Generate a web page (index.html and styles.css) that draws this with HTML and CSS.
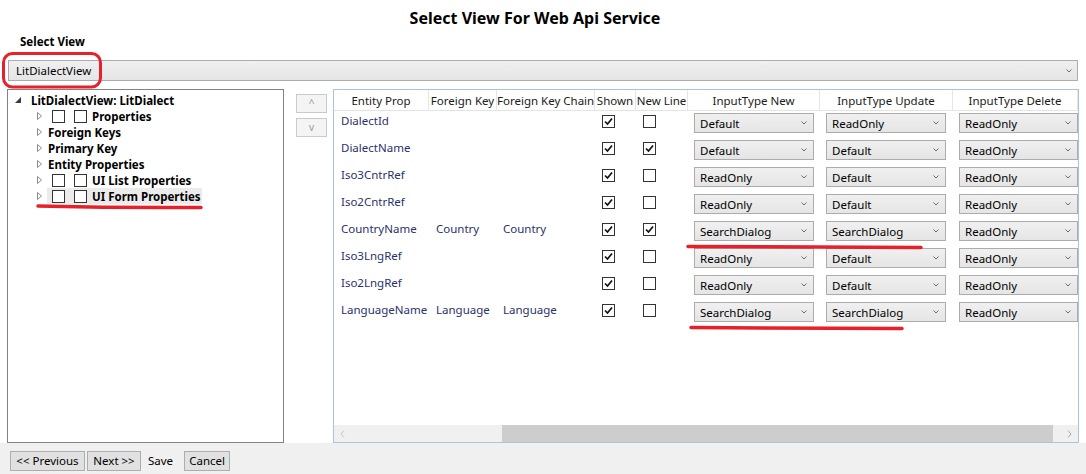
FILE: index.html
```html
<!DOCTYPE html>
<html>
<head>
<meta charset="utf-8">
<title>Select View For Web Api Service</title>
<link rel="stylesheet" href="styles.css">
</head>
<body>
<div class="page">
  <div class="title">Select View For Web Api Service</div>
  <div class="label">Select View</div>
  <div class="combo view-combo"><span>LitDialectView</span><svg class="chev" width="6" height="4" viewBox="0 0 6 4"><polyline points="0.5,0.5 3,3 5.5,0.5"/></svg></div>

  <div class="main">
    <div class="tree">
      <div class="trow root">
        <svg class="exp-open" width="6" height="6" viewBox="0 0 6 6"><polygon points="6,0 6,6 0,6"/></svg>
        <span class="item">LitDialectView: LitDialect</span>
      </div>
      <div class="trow child">
        <svg class="exp" width="6" height="8" viewBox="0 0 6 8"><path d="M0.5,0.5 L4.5,4 L0.5,7.5 Z"/></svg>
        <span class="item"><span class="cb"></span><span class="cb"></span>Properties</span>
      </div>
      <div class="trow child">
        <svg class="exp" width="6" height="8" viewBox="0 0 6 8"><path d="M0.5,0.5 L4.5,4 L0.5,7.5 Z"/></svg>
        <span class="item">Foreign Keys</span>
      </div>
      <div class="trow child">
        <svg class="exp" width="6" height="8" viewBox="0 0 6 8"><path d="M0.5,0.5 L4.5,4 L0.5,7.5 Z"/></svg>
        <span class="item">Primary Key</span>
      </div>
      <div class="trow child">
        <svg class="exp" width="6" height="8" viewBox="0 0 6 8"><path d="M0.5,0.5 L4.5,4 L0.5,7.5 Z"/></svg>
        <span class="item">Entity Properties</span>
      </div>
      <div class="trow child">
        <svg class="exp" width="6" height="8" viewBox="0 0 6 8"><path d="M0.5,0.5 L4.5,4 L0.5,7.5 Z"/></svg>
        <span class="item"><span class="cb"></span><span class="cb"></span>UI List Properties</span>
      </div>
      <div class="trow child">
        <svg class="exp" width="6" height="8" viewBox="0 0 6 8"><path d="M0.5,0.5 L4.5,4 L0.5,7.5 Z"/></svg>
        <span class="item selected"><span class="cb"></span><span class="cb"></span>UI Form Properties</span>
      </div>
    </div>

    <div class="movers">
      <button class="mover">^</button>
      <button class="mover">v</button>
    </div>

    <div class="grid">
      <div class="gcols ghead">
        <div class="hc">Entity Prop</div>
        <div class="hc">Foreign Key</div>
        <div class="hc">Foreign Key Chain</div>
        <div class="hc">Shown</div>
        <div class="hc">New Line</div>
        <div class="hc">InputType New</div>
        <div class="hc">InputType Update</div>
        <div class="hc">InputType Delete</div>
      </div>
      <div class="gbody">
        <div class="gcols grow">
          <div class="tc c1">DialectId</div><div class="tc c2"></div><div class="tc c3"></div>
          <div class="ck"><span class="box on"><svg width="11" height="11" viewBox="0 0 11 11"><path d="M2,5.5 L4.5,8 L9,2.5"/></svg></span></div>
          <div class="ck"><span class="box"></span></div>
          <div class="dd"><div class="combo sm"><span>Default</span><svg class="chev" width="6" height="4" viewBox="0 0 6 4"><polyline points="0.5,0.5 3,3 5.5,0.5"/></svg></div></div>
          <div class="dd"><div class="combo sm"><span>ReadOnly</span><svg class="chev" width="6" height="4" viewBox="0 0 6 4"><polyline points="0.5,0.5 3,3 5.5,0.5"/></svg></div></div>
          <div class="dd"><div class="combo sm"><span>ReadOnly</span><svg class="chev" width="6" height="4" viewBox="0 0 6 4"><polyline points="0.5,0.5 3,3 5.5,0.5"/></svg></div></div>
        </div>
        <div class="gcols grow">
          <div class="tc c1">DialectName</div><div class="tc c2"></div><div class="tc c3"></div>
          <div class="ck"><span class="box on"><svg width="11" height="11" viewBox="0 0 11 11"><path d="M2,5.5 L4.5,8 L9,2.5"/></svg></span></div>
          <div class="ck"><span class="box on"><svg width="11" height="11" viewBox="0 0 11 11"><path d="M2,5.5 L4.5,8 L9,2.5"/></svg></span></div>
          <div class="dd"><div class="combo sm"><span>Default</span><svg class="chev" width="6" height="4" viewBox="0 0 6 4"><polyline points="0.5,0.5 3,3 5.5,0.5"/></svg></div></div>
          <div class="dd"><div class="combo sm"><span>Default</span><svg class="chev" width="6" height="4" viewBox="0 0 6 4"><polyline points="0.5,0.5 3,3 5.5,0.5"/></svg></div></div>
          <div class="dd"><div class="combo sm"><span>ReadOnly</span><svg class="chev" width="6" height="4" viewBox="0 0 6 4"><polyline points="0.5,0.5 3,3 5.5,0.5"/></svg></div></div>
        </div>
        <div class="gcols grow">
          <div class="tc c1">Iso3CntrRef</div><div class="tc c2"></div><div class="tc c3"></div>
          <div class="ck"><span class="box on"><svg width="11" height="11" viewBox="0 0 11 11"><path d="M2,5.5 L4.5,8 L9,2.5"/></svg></span></div>
          <div class="ck"><span class="box"></span></div>
          <div class="dd"><div class="combo sm"><span>ReadOnly</span><svg class="chev" width="6" height="4" viewBox="0 0 6 4"><polyline points="0.5,0.5 3,3 5.5,0.5"/></svg></div></div>
          <div class="dd"><div class="combo sm"><span>Default</span><svg class="chev" width="6" height="4" viewBox="0 0 6 4"><polyline points="0.5,0.5 3,3 5.5,0.5"/></svg></div></div>
          <div class="dd"><div class="combo sm"><span>ReadOnly</span><svg class="chev" width="6" height="4" viewBox="0 0 6 4"><polyline points="0.5,0.5 3,3 5.5,0.5"/></svg></div></div>
        </div>
        <div class="gcols grow">
          <div class="tc c1">Iso2CntrRef</div><div class="tc c2"></div><div class="tc c3"></div>
          <div class="ck"><span class="box on"><svg width="11" height="11" viewBox="0 0 11 11"><path d="M2,5.5 L4.5,8 L9,2.5"/></svg></span></div>
          <div class="ck"><span class="box"></span></div>
          <div class="dd"><div class="combo sm"><span>ReadOnly</span><svg class="chev" width="6" height="4" viewBox="0 0 6 4"><polyline points="0.5,0.5 3,3 5.5,0.5"/></svg></div></div>
          <div class="dd"><div class="combo sm"><span>Default</span><svg class="chev" width="6" height="4" viewBox="0 0 6 4"><polyline points="0.5,0.5 3,3 5.5,0.5"/></svg></div></div>
          <div class="dd"><div class="combo sm"><span>ReadOnly</span><svg class="chev" width="6" height="4" viewBox="0 0 6 4"><polyline points="0.5,0.5 3,3 5.5,0.5"/></svg></div></div>
        </div>
        <div class="gcols grow">
          <div class="tc c1">CountryName</div><div class="tc c2">Country</div><div class="tc c3">Country</div>
          <div class="ck"><span class="box on"><svg width="11" height="11" viewBox="0 0 11 11"><path d="M2,5.5 L4.5,8 L9,2.5"/></svg></span></div>
          <div class="ck"><span class="box on"><svg width="11" height="11" viewBox="0 0 11 11"><path d="M2,5.5 L4.5,8 L9,2.5"/></svg></span></div>
          <div class="dd"><div class="combo sm"><span>SearchDialog</span><svg class="chev" width="6" height="4" viewBox="0 0 6 4"><polyline points="0.5,0.5 3,3 5.5,0.5"/></svg></div></div>
          <div class="dd"><div class="combo sm"><span>SearchDialog</span><svg class="chev" width="6" height="4" viewBox="0 0 6 4"><polyline points="0.5,0.5 3,3 5.5,0.5"/></svg></div></div>
          <div class="dd"><div class="combo sm"><span>ReadOnly</span><svg class="chev" width="6" height="4" viewBox="0 0 6 4"><polyline points="0.5,0.5 3,3 5.5,0.5"/></svg></div></div>
        </div>
        <div class="gcols grow">
          <div class="tc c1">Iso3LngRef</div><div class="tc c2"></div><div class="tc c3"></div>
          <div class="ck"><span class="box on"><svg width="11" height="11" viewBox="0 0 11 11"><path d="M2,5.5 L4.5,8 L9,2.5"/></svg></span></div>
          <div class="ck"><span class="box"></span></div>
          <div class="dd"><div class="combo sm"><span>ReadOnly</span><svg class="chev" width="6" height="4" viewBox="0 0 6 4"><polyline points="0.5,0.5 3,3 5.5,0.5"/></svg></div></div>
          <div class="dd"><div class="combo sm"><span>Default</span><svg class="chev" width="6" height="4" viewBox="0 0 6 4"><polyline points="0.5,0.5 3,3 5.5,0.5"/></svg></div></div>
          <div class="dd"><div class="combo sm"><span>ReadOnly</span><svg class="chev" width="6" height="4" viewBox="0 0 6 4"><polyline points="0.5,0.5 3,3 5.5,0.5"/></svg></div></div>
        </div>
        <div class="gcols grow">
          <div class="tc c1">Iso2LngRef</div><div class="tc c2"></div><div class="tc c3"></div>
          <div class="ck"><span class="box on"><svg width="11" height="11" viewBox="0 0 11 11"><path d="M2,5.5 L4.5,8 L9,2.5"/></svg></span></div>
          <div class="ck"><span class="box"></span></div>
          <div class="dd"><div class="combo sm"><span>ReadOnly</span><svg class="chev" width="6" height="4" viewBox="0 0 6 4"><polyline points="0.5,0.5 3,3 5.5,0.5"/></svg></div></div>
          <div class="dd"><div class="combo sm"><span>Default</span><svg class="chev" width="6" height="4" viewBox="0 0 6 4"><polyline points="0.5,0.5 3,3 5.5,0.5"/></svg></div></div>
          <div class="dd"><div class="combo sm"><span>ReadOnly</span><svg class="chev" width="6" height="4" viewBox="0 0 6 4"><polyline points="0.5,0.5 3,3 5.5,0.5"/></svg></div></div>
        </div>
        <div class="gcols grow">
          <div class="tc c1">LanguageName</div><div class="tc c2">Language</div><div class="tc c3">Language</div>
          <div class="ck"><span class="box on"><svg width="11" height="11" viewBox="0 0 11 11"><path d="M2,5.5 L4.5,8 L9,2.5"/></svg></span></div>
          <div class="ck"><span class="box"></span></div>
          <div class="dd"><div class="combo sm"><span>SearchDialog</span><svg class="chev" width="6" height="4" viewBox="0 0 6 4"><polyline points="0.5,0.5 3,3 5.5,0.5"/></svg></div></div>
          <div class="dd"><div class="combo sm"><span>SearchDialog</span><svg class="chev" width="6" height="4" viewBox="0 0 6 4"><polyline points="0.5,0.5 3,3 5.5,0.5"/></svg></div></div>
          <div class="dd"><div class="combo sm"><span>ReadOnly</span><svg class="chev" width="6" height="4" viewBox="0 0 6 4"><polyline points="0.5,0.5 3,3 5.5,0.5"/></svg></div></div>
        </div>
      </div>
      <div class="hscroll">
        <div class="arrow"><svg width="5" height="8" viewBox="0 0 5 8"><polyline points="4,0.5 1,4 4,7.5"/></svg></div>
        <div class="track-pre"></div>
        <div class="thumb"></div>
        <div class="track-post"></div>
        <div class="arrow right"><svg width="5" height="8" viewBox="0 0 5 8"><polyline points="1,0.5 4,4 1,7.5"/></svg></div>
      </div>
    </div>
  </div>

  <div class="footer">
    <button class="btn prev">&lt;&lt; Previous</button>
    <button class="btn next">Next &gt;&gt;</button>
    <span class="save">Save</span>
    <button class="btn cancel">Cancel</button>
  </div>
</div>

<svg class="annot" width="1086" height="474" viewBox="0 0 1086 474">
  <rect x="3.5" y="53.5" width="97" height="33.5" rx="9" ry="9"/>
  <path d="M38,206 Q120,208 201,207.5"/>
  <path d="M688,246.5 Q800,247.5 921,247.5"/>
  <path d="M691,327.5 Q800,328.5 902,328.5"/>
</svg>
</body>
</html>
```

FILE: styles.css
```css
* { box-sizing: border-box; }

html, body {
  margin: 0;
  padding: 0;
}

body {
  width: 1086px;
  height: 474px;
  overflow: hidden;
  position: relative;
  background: #ffffff;
  font-family: "Noto Sans", "DejaVu Sans", sans-serif;
  font-size: 11.5px;
  color: #000;
}

.page {
  display: flex;
  flex-direction: column;
  height: 474px;
}

.title {
  height: 33px;
  padding-top: 8px;
  padding-right: 16px;
  line-height: 20px;
  text-align: center;
  font-weight: bold;
  font-size: 16px;
}

.label {
  height: 27px;
  line-height: 16px;
  padding-top: 1px;
  padding-left: 20px;
  font-weight: bold;
}

.combo {
  display: flex;
  align-items: center;
  justify-content: space-between;
  border: 1px solid #acacac;
  background: linear-gradient(#f0f0f0, #e5e5e5);
  color: #000;
  white-space: nowrap;
}

.chev polyline {
  fill: none;
  stroke: #6d6d6d;
  stroke-width: 1;
}

.view-combo {
  height: 21px;
  margin: 0 8px;
  padding: 0 5px 0 7px;
}

.main {
  display: flex;
  margin-top: 8px;
  height: 354px;
  padding-left: 7px;
}

/* tree */
.tree {
  width: 277px;
  border: 1px solid #828282;
  padding-top: 2px;
  font-weight: bold;
}

.trow {
  display: flex;
  align-items: center;
  height: 16px;
  white-space: nowrap;
}

.trow.root { padding-left: 7px; }
.trow.child { padding-left: 29px; }

.exp-open { margin-right: 9px; }
.exp-open polygon { fill: #3c3c3c; }

.exp { margin-right: 4px; }
.exp path {
  fill: none;
  stroke: #8a8a8a;
  stroke-width: 1;
}

.item {
  display: flex;
  align-items: center;
  height: 16px;
  padding: 0 1px 0 1px;
}

.item.selected { background: #ebebeb; }

.item .cb {
  width: 13px;
  height: 13px;
  border: 1px solid #333;
  background: #fff;
  margin-left: 4px;
  margin-right: 9px;
}

.item .cb + .cb {
  margin-left: 0;
  margin-right: 5px;
}

/* move buttons */
.movers {
  display: flex;
  flex-direction: column;
  gap: 5px;
  width: 31px;
  margin-left: 12px;
  padding-top: 5px;
}

.mover {
  width: 31px;
  height: 19px;
  padding: 0;
  border: 1px solid #cacaca;
  background: #f4f4f4;
  color: #9a9a9a;
  font-family: "Noto Sans", sans-serif;
  font-size: 10px;
  line-height: 17px;
}

/* grid */
.grid {
  flex: 1;
  margin-left: 6px;
  margin-right: 7px;
  border: 1px solid #a9c4de;
  display: flex;
  flex-direction: column;
  min-width: 0;
}

.gcols {
  display: grid;
  grid-template-columns: 95px 68px 98px 41px 52px 132px 133px 1fr;
}

.ghead {
  height: 21px;
  border-bottom: 1px solid #e4e4e4;
}

.hc {
  text-align: center;
  padding-top: 3px;
  line-height: 16px;
  border-right: 1px solid #e6e6e6;
  white-space: nowrap;
  color: #1a1a1a;
  overflow: hidden;
}

.gbody { flex: 1; }

.grow { height: 27px; }

.tc {
  padding-top: 2px;
  line-height: 16px;
  color: #2a3170;
  white-space: nowrap;
}

.c1 { padding-left: 7px; }
.c2 { padding-left: 7px; }
.c3 { padding-left: 6px; }

.ck { padding: 4px 0 0 7px; }

.box {
  display: block;
  width: 13px;
  height: 13px;
  border: 1px solid #333;
  background: #fff;
}

.box svg { display: block; }

.box path {
  fill: none;
  stroke: #111;
  stroke-width: 1.7;
}

.dd { padding: 2px 0 0 6px; }

.combo.sm {
  width: 120px;
  height: 20px;
  padding: 0 6px 0 5px;
}

.dd:last-child .combo.sm { width: 119px; }

.hscroll {
  height: 17px;
  display: flex;
  background: #f0f0f0;
}

.arrow {
  width: 17px;
  display: flex;
  align-items: center;
  justify-content: center;
}

.arrow polyline {
  fill: none;
  stroke: #c4c4c4;
  stroke-width: 1;
}

.arrow.right polyline { stroke: #a6a6a6; }

.track-pre { width: 151px; }

.thumb {
  width: 551px;
  background: #cdcdcd;
}

.track-post { flex: 1; }

/* footer */
.footer {
  flex: 1;
  background: #f0f0f0;
  display: flex;
  align-items: flex-start;
  padding: 8px 0 0 10px;
}

.btn {
  height: 20px;
  padding: 0;
  border: 1px solid #adadad;
  background: #e1e1e1;
  font-family: "Noto Sans", sans-serif;
  font-size: 11.5px;
  line-height: 18px;
  color: #000;
  text-align: center;
}

.prev { width: 75px; }
.next { width: 54px; margin-left: 2px; }
.cancel { width: 46px; }

.save {
  line-height: 20px;
  margin-left: 7px;
  margin-right: 11px;
}

/* red annotation overlay */
.annot {
  position: absolute;
  left: 0;
  top: 0;
  pointer-events: none;
}

.annot rect,
.annot path {
  fill: none;
  stroke: #e8202a;
  stroke-width: 3.5;
  stroke-linecap: round;
}

.annot rect { stroke-width: 3; }
```
